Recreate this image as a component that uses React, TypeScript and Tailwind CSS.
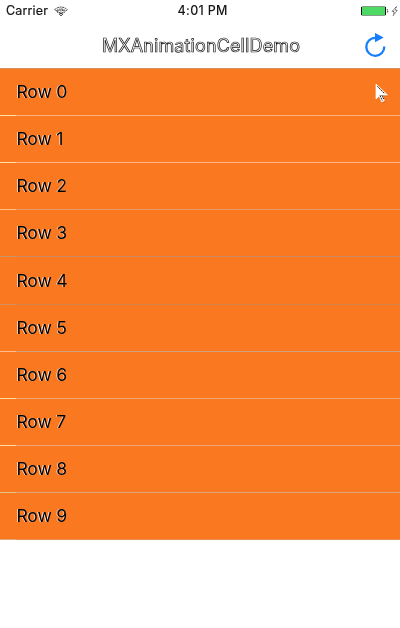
import React from 'react';

const rows = [
  { id: 0, line: 'bg-[#ffb07c]', inset: 'bg-[#ffe3a0]', height: 'h-[47px]' },
  { id: 1, line: 'bg-[#ffb684]', inset: 'bg-[#ffe3a0]', height: 'h-[47px]' },
  { id: 2, line: 'bg-[#e79a68]', inset: 'bg-[#ffc080]', height: 'h-[47px]' },
  { id: 3, line: 'bg-[#c98a62]', inset: 'bg-[#c9966c]', height: 'h-[47px]' },
  { id: 4, line: 'bg-[#d58248]', inset: 'bg-[#d58f58]', height: 'h-[48px]' },
  { id: 5, line: 'bg-[#d0a080]', inset: 'bg-[#ffbc88]', height: 'h-[47px]' },
  { id: 6, line: 'bg-[#f0a878]', inset: 'bg-[#ffdc9e]', height: 'h-[47px]' },
  { id: 7, line: 'bg-[#f2a674]', inset: 'bg-[#ffdc9e]', height: 'h-[47px]' },
  { id: 8, line: 'bg-[#dda67c]', inset: 'bg-[#e3c590]', height: 'h-[47px]' },
  { id: 9, line: 'bg-[#e98d50]', inset: 'bg-[#e3a678]', height: 'h-[47px]' },
];

function WifiIcon() {
  return (
    <svg className="ml-[6px] h-[11px] w-[14px]" viewBox="0 0 14 11" fill="none" stroke="#222" strokeWidth="0.9">
      <path d="M.7 3.6Q7-1.5 13.3 3.6L11.9 5Q7 1 2.1 5Z" strokeDasharray="2 .7" />
      <path d="M3 5.7Q7 2.7 11 5.7L9.6 7.1Q7 5.2 4.4 7.1Z" strokeDasharray="2 .7" />
      <path d="M5.2 8Q7 6.7 8.8 8L7 9.9Z" />
    </svg>
  );
}

function StatusBar() {
  return (
    <div className="grid h-[22px] grid-cols-3 items-center text-[13px] text-[#151515]">
      <div className="flex items-center pl-[6px]">
        <span className="pt-px text-[12.5px] tracking-[0.15px] will-change-transform [-webkit-text-stroke:0.2px_#151515]">Carrier</span>
        <WifiIcon />
      </div>
      <span className="pt-px pl-[6px] text-center text-[12.5px] font-medium tracking-[0.3px] will-change-transform [text-shadow:0.5px_0_0_#fff]">4:01 PM</span>
      <div className="flex justify-end pr-[2px]">
        <svg width="37" height="14" viewBox="0 0 37 14" fill="none">
          <rect x=".5" y="2.5" width="24" height="9" rx="1" fill="#4cd964" stroke="#777" strokeWidth=".7" />
          <path d="M.5 3v8M24.5 3v8" stroke="#111" />
          <path d="M26 5q1.5 2 0 4" stroke="#222" strokeDasharray="1.5 .7" />
          <path d="M35.5 2.5l-4.5 5h2.3l-1 4 4-5.2H34Z" stroke="#333" strokeWidth=".8" strokeDasharray="1.7 .7" />
        </svg>
      </div>
    </div>
  );
}

function RefreshIcon() {
  return (
    <svg className="block" width="22" height="26" viewBox="0 0 22 26" fill="none">
      <path d="M11.5 4.8H10.3A9 9 0 1 0 19.3 13.5" stroke="#157efb" strokeWidth="2.3" />
      <path d="M10 0V9.3L18.7 4.5Z" fill="#157efb" />
    </svg>
  );
}

function Cursor() {
  return (
    <svg className="absolute top-[83px] left-[375px]" width="16" height="22" viewBox="0 0 16 22">
      <path d="M1 1V16L4.3 13L7 19.5L10 18L7.7 12.4H12.8Z" fill="#a94812" opacity=".5" transform="translate(.6 .8)" />
      <path d="M1 1V16L4.3 13.2L6.7 19L9.5 17.8L7.2 12.1H12.5Z" fill="#fff" stroke="#fff" strokeWidth=".7" />
      <path d="M2.3 3.3L9.6 10.7M5 12.3L7.3 17.7M6.8 12L9 16.7" stroke="#222" strokeDasharray="2 .6" />
    </svg>
  );
}

export default function App() {
  return (
    <main className="relative h-[628px] w-[400px] overflow-hidden bg-white font-['Inter',sans-serif]">
      <header className="h-[69px] border-b border-[#d6905f]">
        <StatusBar />
        <div className="grid h-[46px] grid-cols-[50px_1fr_50px] items-center">
          <span />
          <h1 className="pt-px pl-[2px] text-center text-[18px] leading-[46px] font-normal tracking-[0.12px] whitespace-nowrap text-white will-change-transform [-webkit-text-stroke:0.7px_#111]">MXAnimationCellDemo</h1>
          <button className="ml-[15px] h-[26px] w-[22px]" aria-label="Refresh">
            <RefreshIcon />
          </button>
        </div>
      </header>
      <ul>
        {rows.map((row) => (
          <li key={row.id} className={`flex flex-col bg-[#fa7820] ${row.height}`}>
            <span className="flex flex-1 items-center pt-px pl-[16.5px] text-[17.5px] tracking-[-0.15px] text-black will-change-transform [text-shadow:-0.8px_0.4px_0_#ffffffd0]">Row {row.id}</span>
            <span className="flex h-px">
              <span className={`w-[16px] ${row.inset}`} />
              <span className={`flex-1 ${row.line}`} />
            </span>
          </li>
        ))}
      </ul>
      <Cursor />
    </main>
  );
}
